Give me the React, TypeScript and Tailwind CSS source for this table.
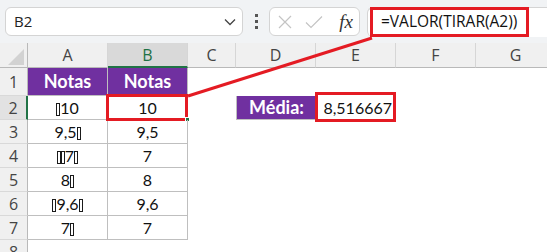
import clsx from 'clsx';

const RED = 'border-[#e41b23]';

const columns = [
  { key: 'A', w: 'w-[80px]' },
  { key: 'B', w: 'w-[80px]' },
  { key: 'C', w: 'w-[48px]' },
  { key: 'D', w: 'w-[80px]' },
  { key: 'E', w: 'w-[80px]' },
  { key: 'F', w: 'w-[80px]' },
  { key: 'G', w: 'w-[80px]' },
];

// "~" marks a character the font cannot render (shown as an empty box)
const notas = [
  { raw: '~10', val: '10' },
  { raw: '9,5~', val: '9,5' },
  { raw: '~~7~', val: '7' },
  { raw: '8~', val: '8' },
  { raw: '~9,6~', val: '9,6' },
  { raw: '7~', val: '7' },
];

const Tofu = () => (
  <span className="inline-block w-[4px] h-[13px] border border-[#1a1a1a] align-[-2px]" />
);

const RawText = ({ text }: { text: string }) => (
  <span>
    {text.split('').map((ch, i) => (ch === '~' ? <Tofu key={i} /> : <span key={i}>{ch}</span>))}
  </span>
);

const RowHeader = ({ n, h, active }: { n: number; h: string; active?: boolean }) => (
  <div
    className={clsx(
      'w-[28px] shrink-0 flex items-center justify-center text-[16px] font-["Open_Sans",sans-serif] border-b border-[#d9d9d9]',
      h,
      active
        ? 'bg-[#e2e2e2] text-[#444] border-r-2 border-r-[#217346]'
        : 'bg-[#f0f0f0] text-[#444] border-r border-r-[#b9b9b9]'
    )}
  >
    {n}
  </div>
);

export default function App() {
  return (
    <div className="relative w-[547px] h-[252px] overflow-hidden bg-white font-['Open_Sans',sans-serif]">
      {/* Name box + formula bar */}
      <div className="h-[43px] flex items-center pl-[5px] bg-[#f1f3f5]">
        <div className="w-[238px] h-[29px] flex items-center justify-between pl-[8px] pr-[6px] bg-white border border-[#d4d4d4] rounded-[6px]">
          <span className="text-[15px] text-[#222]">B2</span>
          <svg width="12" height="8" viewBox="0 0 12 8" fill="none">
            <path d="M1 1.5 6 6.5 11 1.5" stroke="#444" strokeWidth="1.3" />
          </svg>
        </div>
        <div className="w-[26px] flex flex-col items-center gap-[3px]">
          <span className="w-[3px] h-[3px] bg-[#555]" />
          <span className="w-[3px] h-[3px] bg-[#555]" />
          <span className="w-[3px] h-[3px] bg-[#555]" />
        </div>
        <div className="w-[91px] h-[29px] flex items-center pl-[8px] pr-[6px] gap-[13px] bg-white border border-[#d4d4d4] rounded-[6px]">
          <svg width="14" height="14" viewBox="0 0 14 14" fill="none">
            <path d="M1 1 13 13M13 1 1 13" stroke="#c4c4c4" strokeWidth="1.2" />
          </svg>
          <svg width="18" height="14" viewBox="0 0 18 14" fill="none">
            <path d="M1 7.5 6 12.5 17 1.5" stroke="#c4c4c4" strokeWidth="1.2" />
          </svg>
          <span className="ml-auto text-[19px] italic leading-none text-[#333] font-['Liberation_Serif',serif]">fx</span>
        </div>
        <div className="ml-[7px] flex-1 h-[30px] flex items-center pl-[2px] bg-white border-l border-t border-[#d4d4d4] rounded-l-[6px]">
          <div className={clsx('w-[159px] h-[30px] flex items-center pl-[8px] border-[3px]', RED)}>
            <span className="text-[15.5px] text-[#111] whitespace-nowrap">=VALOR(TIRAR(A2))</span>
          </div>
        </div>
      </div>

      {/* Column headers */}
      <div className="flex h-[25px] bg-[#f0f0f0]">
        <div className="w-[28px] shrink-0 flex items-end justify-end pr-[3px] pb-[2px] border-b border-r border-[#b9b9b9]">
          <svg width="16" height="16" viewBox="0 0 16 16">
            <path d="M16 0 16 16 0 16Z" fill="#d2d2d2" />
          </svg>
        </div>
        {columns.map((c) => (
          <div
            key={c.key}
            className={clsx(
              'shrink-0 flex items-center justify-center text-[16px] border-r border-r-[#d6d6d6]',
              c.w,
              c.key === 'B'
                ? 'bg-[#d9d9d9] text-[#1e7145] border-b-2 border-b-[#217346]'
                : 'text-[#444] border-b border-b-[#b9b9b9]'
            )}
          >
            {c.key}
          </div>
        ))}
      </div>

      {/* Row 1: table headers */}
      <div className="flex h-[28px]">
        <RowHeader n={1} h="h-[28px]" />
        {['A', 'B'].map((k) => (
          <div
            key={k}
            className="w-[80px] shrink-0 flex items-center justify-center bg-[#7030a0] text-white text-[18px] font-bold font-['Lato',sans-serif] border-r border-b border-[#bfbfbf]"
          >
            Notas
          </div>
        ))}
      </div>

      {/* Rows 2-7 */}
      {notas.map((row, i) => {
        const n = i + 2;
        const selected = n === 2;
        return (
          <div key={n} className="flex h-[24px] text-[16px] text-[#111] font-['Lato',sans-serif]">
            <RowHeader n={n} h="h-[24px]" active={selected} />
            <div className="w-[80px] shrink-0 flex items-center justify-center border-r border-b border-[#bfbfbf]">
              <RawText text={row.raw} />
            </div>
            <div className="relative w-[80px] shrink-0 flex items-center justify-center border-r border-b border-[#bfbfbf]">
              {row.val}
              {selected && (
                <>
                  <span className={clsx('absolute -top-[2px] -left-[2px] -right-[1px] -bottom-[2px] border-[3px]', RED)} />
                  <span className="absolute -right-[3px] -bottom-[3px] w-[5px] h-[5px] bg-[#217346] border border-white" />
                </>
              )}
            </div>
            <div className="w-[48px] shrink-0" />
            {selected ? (
              <>
                <div className="w-[80px] shrink-0 flex items-center justify-center bg-[#7030a0] text-white text-[18px] font-bold border-l border-b border-[#bfbfbf]">
                  Média:
                </div>
                <div className="relative w-[80px] shrink-0 flex items-center justify-end pr-[4px] text-[16px]">
                  8,516667
                  <span className={clsx('absolute -top-[4px] -left-[1px] right-0 -bottom-[2px] border-[3px]', RED)} />
                </div>
              </>
            ) : null}
          </div>
        );
      })}

      {/* Row 8 */}
      <div className="flex h-[24px]">
        <RowHeader n={8} h="h-[24px]" />
      </div>

      {/* Arrow from B2 to the formula */}
      <svg className="absolute inset-0 pointer-events-none" width="547" height="252">
        <line x1="188" y1="96" x2="372" y2="38" stroke="#e41b23" strokeWidth="3" />
      </svg>
    </div>
  );
}
